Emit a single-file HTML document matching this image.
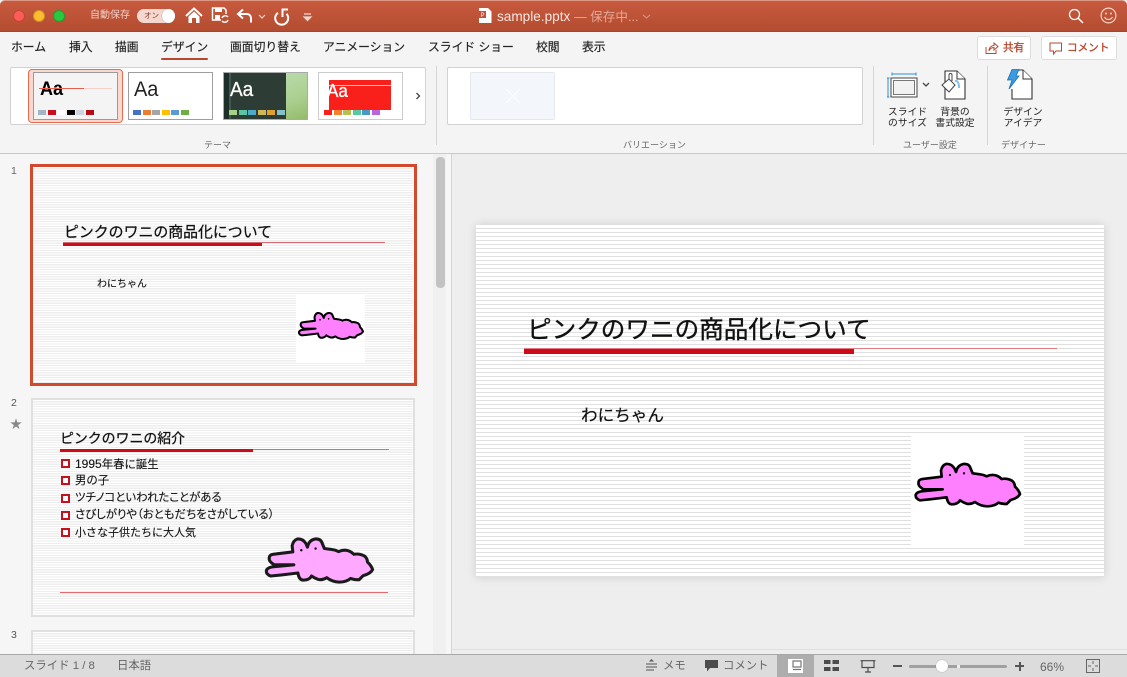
<!DOCTYPE html>
<html lang="ja"><head><meta charset="utf-8"><style>
*{box-sizing:border-box}
html,body{margin:0;padding:0;width:1127px;height:677px;overflow:hidden;background:#eee}
body{font-family:"Liberation Sans","Noto Sans CJK JP",sans-serif;position:relative;color:#222}
.a{position:absolute}
.t{position:absolute;white-space:nowrap;line-height:1}
.tab{font-size:11.8px;top:42px;color:#222;-webkit-text-stroke:.15px #222}
.g{font-size:9px;top:141px;color:#666}
.c{text-align:center;font-size:9.8px;line-height:11px;color:#222;position:absolute;white-space:nowrap}
.sw{position:absolute;height:5px;width:8px}
.lines-main{background:repeating-linear-gradient(to bottom,#fff 0,#fff 3px,#e0e0e0 3px,#e0e0e0 4px)}
.lines-th{background:repeating-linear-gradient(to bottom,#fff 0,#fff 1.2px,#eeeeee 1.2px,#eeeeee 2.4px)}
.bul{position:absolute;left:61px;width:9px;height:9px;border:2px solid #c8101c;background:#fff}
.li{position:absolute;left:75px;font-size:11.4px;line-height:1;white-space:nowrap;color:#111;-webkit-text-stroke:.12px #111}
.st{font-size:11.4px;color:#666;top:661px}
svg{position:absolute;overflow:visible}
</style></head><body>

<!-- title bar -->
<div class="a" style="left:0;top:0;width:1127px;height:32px;background:linear-gradient(#c85a3e,#b34c30);border-top:1px solid #de9684;border-bottom:1px solid #a5452c;border-radius:5px 5px 0 0"></div>
<div class="a" style="left:13px;top:10px;width:12px;height:12px;border-radius:50%;background:#fc5d57;border:1px solid #c9403a"></div>
<div class="a" style="left:33px;top:10px;width:12px;height:12px;border-radius:50%;background:#fdbc2e;border:1px solid #c99625"></div>
<div class="a" style="left:53px;top:10px;width:12px;height:12px;border-radius:50%;background:#29c83f;border:1px solid #1f9e30"></div>
<div class="t" style="left:90px;top:11px;font-size:10px;color:#f3cfc6">自動保存</div>
<div class="a" style="left:137px;top:9px;width:38px;height:14px;border-radius:7px;background:#f4d8d0"></div>
<div class="t" style="left:144px;top:12px;font-size:7.5px;color:#8a3a28">オン</div>
<div class="a" style="left:162px;top:9px;width:13px;height:14px;border-radius:50%;background:#fff;box-shadow:0 0 1px #777"></div>
<!-- home -->
<svg style="left:185px;top:7px" width="18" height="17" viewBox="0 0 18 17"><path d="M1 9 L9 1.500 L17 9" fill="none" stroke="#fff" stroke-width="2"/><path d="M3.500 9.500 L9 4.500 L14.500 9.500 V16 H11 V11 H7 V16 H3.500Z" fill="#fff"/></svg>
<!-- save -->
<svg style="left:211px;top:7px" width="18" height="18" viewBox="0 0 18 18"><path d="M10 13 H1.500 V1 H13 L15 3 V7" fill="none" stroke="#fff" stroke-width="1.500"/><path d="M4 1 H11 V5 H4Z M4 8 H9 V13 H4Z" fill="#fff"/><path d="M11 11 A3.500 3.500 0 0 1 17 10 M17 13 A3.500 3.500 0 0 1 11 14" fill="none" stroke="#fff" stroke-width="1.400"/></svg>
<!-- undo -->
<svg style="left:236px;top:8px" width="18" height="16" viewBox="0 0 18 16"><path d="M7 1.500 L2 6 L7 10.500 M2 6 H11 A4 4 0 0 1 15 10 V14.500" fill="none" stroke="#fff" stroke-width="2"/></svg>
<svg style="left:258px;top:14px" width="8" height="5" viewBox="0 0 8 5"><path d="M1 1 L4 4 L7 1" fill="none" stroke="#f5d5cc" stroke-width="1.200"/></svg>
<!-- redo -->
<svg style="left:273px;top:7px" width="17" height="18" viewBox="0 0 17 18"><path d="M5 5.800 A6.500 6.500 0 1 0 13.500 6.800" fill="none" stroke="#fff" stroke-width="2"/><path d="M9.500 10 V2.500 H15" fill="none" stroke="#fff" stroke-width="2"/></svg>
<svg style="left:303px;top:13px" width="9" height="8" viewBox="0 0 9 8"><path d="M1 1 H8 M1 4 H8 L4.500 7.500Z" stroke="#f5d5cc" stroke-width="1.200" fill="#f5d5cc"/></svg>
<!-- file -->
<svg style="left:479px;top:8px" width="13" height="15" viewBox="0 0 13 15"><path d="M0 0 H9 L12.500 3.500 V15 H0Z" fill="#fff"/><rect x="0" y="3" width="7" height="7" fill="#c44f37"/><text x="1.500" y="9" font-size="6" fill="#fff" font-family="Liberation Sans">P</text></svg>
<div class="t" style="left:497px;top:10px;font-size:13.6px;color:#f7e5e0">sample.pptx <span style="color:#e5a999;font-size:12.600px">— 保存中...</span></div>
<svg style="left:642px;top:14px" width="9" height="5" viewBox="0 0 9 5"><path d="M1 1 L4.500 4 L8 1" fill="none" stroke="#dc9a88" stroke-width="1"/></svg>
<!-- search, smile -->
<svg style="left:1068px;top:8px" width="16" height="16" viewBox="0 0 16 16"><circle cx="6.500" cy="6.500" r="5" fill="none" stroke="#fff" stroke-width="1.300"/><path d="M10 10 L15 15" stroke="#fff" stroke-width="1.500"/></svg>
<svg style="left:1100px;top:7px" width="17" height="17" viewBox="0 0 17 17"><circle cx="8.500" cy="8.500" r="7.400" fill="none" stroke="#f4d3ca" stroke-width="1.200"/><circle cx="6" cy="6.500" r="1" fill="#f4d3ca"/><circle cx="11" cy="6.500" r="1" fill="#f4d3ca"/><path d="M4.500 10 A4.500 4.500 0 0 0 12.500 10" fill="none" stroke="#f4d3ca" stroke-width="1.200"/></svg>

<!-- ribbon -->
<div class="a" style="left:0;top:32px;width:1127px;height:122px;background:#f4f4f4;border-bottom:1px solid #c9c9c9"></div>
<div class="t tab" style="left:11px">ホーム</div>
<div class="t tab" style="left:69px">挿入</div>
<div class="t tab" style="left:115px">描画</div>
<div class="t tab" style="left:161px">デザイン</div>
<div class="a" style="left:161px;top:58px;width:47px;height:2px;border-radius:1px;background:#b5492f"></div>
<div class="t tab" style="left:230px">画面切り替え</div>
<div class="t tab" style="left:323px">アニメーション</div>
<div class="t tab" style="left:428px">スライド ショー</div>
<div class="t tab" style="left:536px">校閲</div>
<div class="t tab" style="left:582px">表示</div>

<!-- share / comment -->
<div class="a" style="left:977px;top:36px;width:54px;height:24px;background:#fff;border:1px solid #dcdcdc;border-radius:3px"></div>
<svg style="left:985px;top:41px" width="14" height="14" viewBox="0 0 14 14"><path d="M1 6 V12.500 H11 V9" fill="none" stroke="#b9492f" stroke-width="1"/><path d="M4 10 C4 6 7 4.500 9 4.500 V2 L13 5.500 L9 9 V6.500 C7 6.500 5 7.500 4 10Z" fill="none" stroke="#b9492f" stroke-width="1"/></svg>
<div class="t" style="left:1003px;top:43px;font-size:10.6px;color:#b9492f;-webkit-text-stroke:.35px #b9492f">共有</div>
<div class="a" style="left:1041px;top:36px;width:76px;height:24px;background:#fff;border:1px solid #dcdcdc;border-radius:3px"></div>
<svg style="left:1049px;top:42px" width="14" height="13" viewBox="0 0 14 13"><path d="M1 1 H12.500 V9 H7 L4.500 12 V9 H1Z" fill="none" stroke="#b9492f" stroke-width="1"/></svg>
<div class="t" style="left:1067px;top:43px;font-size:10.6px;color:#b9492f;-webkit-text-stroke:.35px #b9492f">コメント</div>

<!-- theme gallery -->
<div class="a" style="left:10px;top:67px;width:416px;height:58px;background:#fff;border:1px solid #d2d2d2;border-radius:2px"></div>
<div class="a" style="left:28px;top:69px;width:95px;height:54px;background:#f9d8d0;border:1px solid #ea6a50;border-radius:4px"></div>
<div class="a" style="left:33px;top:72px;width:85px;height:48px;background:#f4f4f4;border:1px solid #9a9a9a"></div>
<div class="t" style="left:40px;top:80px;font-size:19px;color:#000;font-weight:700;transform:scaleX(.95);transform-origin:left">Aa</div>
<div class="a" style="left:39px;top:88px;width:45px;height:1px;background:#e2604c"></div>
<div class="a" style="left:84px;top:88px;width:28px;height:1px;background:#f6cfc8"></div>
<div class="sw" style="left:38px;top:110px;background:#a5b5c8"></div>
<div class="sw" style="left:48px;top:110px;background:#c8101c"></div>
<div class="sw" style="left:57px;top:110px;background:#fff"></div>
<div class="sw" style="left:67px;top:110px;background:#000"></div>
<div class="sw" style="left:76px;top:110px;background:#ccd4e0"></div>
<div class="sw" style="left:86px;top:110px;background:#b80c14"></div>

<div class="a" style="left:128px;top:72px;width:85px;height:48px;background:#fff;border:1px solid #9e9e9e"></div>
<div class="t" style="left:134px;top:79px;font-size:21px;color:#222;transform:scaleX(.95);transform-origin:left">Aa</div>
<div class="sw" style="left:133px;top:110px;background:#4472c4"></div>
<div class="sw" style="left:143px;top:110px;background:#ed7d31"></div>
<div class="sw" style="left:152px;top:110px;background:#a5a5a5"></div>
<div class="sw" style="left:162px;top:110px;background:#ffc000"></div>
<div class="sw" style="left:171px;top:110px;background:#5b9bd5"></div>
<div class="sw" style="left:181px;top:110px;background:#70ad47"></div>

<div class="a" style="left:223px;top:72px;width:85px;height:48px;background:linear-gradient(160deg,#c5e2bc,#a9cf8f 70%,#94bb6a);border:1px solid #aaa"></div>
<div class="a" style="left:224px;top:73px;width:62px;height:46px;background:#2d3c35"></div>
<div class="a" style="left:224px;top:73px;width:6px;height:46px;background:#1e2e2b"></div>
<div class="a" style="left:229px;top:73px;width:2px;height:46px;background:#405a50"></div>
<div class="t" style="left:230px;top:80px;font-size:20px;color:#fff;transform:scaleX(.95);transform-origin:left;-webkit-text-stroke:.3px #fff">Aa</div>
<div class="sw" style="left:229px;top:110px;background:#a3d288"></div>
<div class="sw" style="left:239px;top:110px;background:#5cc5a0"></div>
<div class="sw" style="left:248px;top:110px;background:#4eaac8"></div>
<div class="sw" style="left:258px;top:110px;background:#d0b858"></div>
<div class="sw" style="left:267px;top:110px;background:#e0a030"></div>
<div class="sw" style="left:277px;top:110px;background:#88c0c8"></div>

<div class="a" style="left:318px;top:72px;width:85px;height:48px;background:#fff;border:1px solid #ccc"></div>
<div class="a" style="left:329px;top:80px;width:62px;height:30px;background:#f9201c"></div>
<div class="a" style="left:329px;top:85px;width:62px;height:1px;background:#fbb"></div>
<div class="t" style="left:327px;top:82px;font-size:18px;color:#fff;transform:scaleX(.95);transform-origin:left;-webkit-text-stroke:.3px #fff">Aa</div>
<div class="sw" style="left:324px;top:110px;background:#f9201c"></div>
<div class="sw" style="left:334px;top:110px;background:#f58030"></div>
<div class="sw" style="left:343px;top:110px;background:#b8c050"></div>
<div class="sw" style="left:353px;top:110px;background:#5cc8a0"></div>
<div class="sw" style="left:362px;top:110px;background:#4898c8"></div>
<div class="sw" style="left:372px;top:110px;background:#b868d8"></div>
<svg style="left:415px;top:92px" width="6" height="8" viewBox="0 0 6 8"><path d="M1.500 1 L4.500 4 L1.500 7" fill="none" stroke="#444" stroke-width="1.300"/></svg>
<div class="t g" style="left:204px">テーマ</div>
<div class="a" style="left:436px;top:66px;width:1px;height:79px;background:#d5d5d5"></div>

<!-- variations -->
<div class="a" style="left:447px;top:67px;width:416px;height:58px;background:#fff;border:1px solid #d2d2d2;border-radius:2px"></div>
<div class="a" style="left:470px;top:72px;width:85px;height:48px;background:#f3f7fc;border:1px solid #e4e8ee;border-radius:2px"></div>
<svg style="left:505px;top:88px" width="16" height="16" viewBox="0 0 16 16"><path d="M1 1 L15 15 M15 1 L1 15" stroke="#fff" stroke-width="1"/></svg>
<div class="t g" style="left:623px">バリエーション</div>
<div class="a" style="left:873px;top:66px;width:1px;height:79px;background:#d5d5d5"></div>

<!-- slide size -->
<svg style="left:887px;top:72px" width="32" height="26" viewBox="0 0 32 26"><path d="M5 2 H29 M5 0.500 V3.500 M29 0.500 V3.500 M1 6 V25 M0 6 H2.500 M0 25 H2.500" stroke="#2d8fd8" stroke-width="1" fill="none"/><rect x="4" y="6" width="26" height="19" fill="#fff" stroke="#444"/><rect x="6.500" y="8.500" width="21" height="14" fill="#f2f2f2" stroke="#777"/></svg>
<svg style="left:922px;top:82px" width="8" height="6" viewBox="0 0 8 6"><path d="M1 1 L4 4 L7 1" fill="none" stroke="#444" stroke-width="1.300"/></svg>
<!-- bg format -->
<svg style="left:941px;top:70px" width="26" height="30" viewBox="0 0 26 30"><path d="M4 1 H16 L24 9 V29 H4Z" fill="#fff" stroke="#333" stroke-width="1.100"/><path d="M16 1 V9 H24" fill="#fff" stroke="#333" stroke-width="1"/><path d="M1 15 L8 9 L14 15 L8 22Z" fill="#fff" stroke="#444" stroke-width="1"/><path d="M8 9 V5 A1.500 1.500 0 0 1 11 5 V11" fill="none" stroke="#444"/><path d="M14 11 C17 10 18 14 18 18" fill="none" stroke="#86bfe8" stroke-width="2"/></svg>
<div class="c" style="left:880px;top:107px;width:55px">スライド<br>のサイズ</div>
<div class="c" style="left:930px;top:107px;width:50px">背景の<br>書式設定</div>
<div class="t g" style="left:903px">ユーザー設定</div>
<div class="a" style="left:987px;top:66px;width:1px;height:79px;background:#d5d5d5"></div>

<!-- designer -->
<svg style="left:1006px;top:69px" width="28" height="31" viewBox="0 0 28 31"><path d="M7 1 H17 L26 10 V30 H6 V20" fill="#fff" stroke="#333" stroke-width="1.100"/><path d="M17 1 V10 H26" fill="#fff" stroke="#333" stroke-width="1"/><path d="M6 0.500 H13 L10 7 H13 L3 20 L6 11 H1.500Z" fill="#3b9be0" stroke="#1f6fb0" stroke-width=".8"/></svg>
<div class="c" style="left:998px;top:107px;width:50px">デザイン<br>アイデア</div>
<div class="t g" style="left:1001px">デザイナー</div>

<!-- panes -->
<div class="a" style="left:0;top:154px;width:433px;height:501px;background:#f6f6f6"></div>
<div class="a" style="left:433px;top:154px;width:13px;height:501px;background:#f0f0f0"></div>
<div class="a" style="left:446px;top:154px;width:6px;height:501px;background:#f6f6f6;border-right:1px solid #d4d4d4"></div>
<div class="a" style="left:436px;top:157px;width:9px;height:131px;border-radius:4px;background:#c3c3c3"></div>
<div class="a" style="left:452px;top:154px;width:675px;height:501px;background:#eeeeee"></div>
<div class="a" style="left:452px;top:649px;width:675px;height:1px;background:#dedede"></div>

<!-- thumb 1 -->
<div class="t" style="left:11px;top:166px;font-size:10.5px;color:#666">1</div>
<div class="a lines-th" style="left:30px;top:164px;width:387px;height:222px;border:3px solid #d24a2e"></div>
<div class="t" style="left:64px;top:226px;font-size:14.900px;color:#111;-webkit-text-stroke:.25px #111">ピンクのワニの商品化について</div>
<div class="a" style="left:63px;top:242px;width:322px;height:1px;background:#d66a72"></div>
<div class="a" style="left:63px;top:243px;width:199px;height:3px;background:#cc0c18"></div>
<div class="t" style="left:97px;top:280px;font-size:10px;color:#111;-webkit-text-stroke:.12px #111">わにちゃん</div>
<div class="a" style="left:296px;top:294px;width:69px;height:69px;background:#fff"></div>
<svg style="left:277px;top:286px" width="98.400" height="86" viewBox="0 0 480 420"><path d="M122 202 Q112 194 117 182 Q120 177 135 176 L185 170 L183 152 Q186 136 198 132 Q214 130 224 146 L228 156 Q232 136 250 132 Q268 130 272 146 L278 160 L300 163 Q310 164 320 169 Q335 162 350 167 Q358 170 365 177 Q380 174 396 182 Q404 188 405 200 Q416 210 420 222 Q414 234 392 240 Q386 246 380 252 Q365 252 355 248 Q345 258 322 259 Q300 258 285 246 Q272 254 260 251 Q250 248 240 241 Q234 253 215 253 Q203 252 200 232 L150 238 L120 241 Q106 236 107 225 Q110 216 125 214 L188 208 L130 208Z" fill="#ff80ff" stroke="#000" stroke-width="10" stroke-linejoin="round"/><circle cx="210" cy="165" r="4" fill="#000"/><circle cx="252" cy="160" r="4" fill="#000"/></svg>

<!-- thumb 2 -->
<div class="t" style="left:11px;top:398px;font-size:10.5px;color:#555">2</div>
<div class="t" style="left:10px;top:418px;font-size:12px;color:#888">★</div>
<div class="a lines-th" style="left:31px;top:398px;width:384px;height:219px;border:2px solid #e0e0e0"></div>
<div class="t" style="left:60px;top:432px;font-size:13.900px;color:#111;-webkit-text-stroke:.25px #111">ピンクのワニの紹介</div>
<div class="a" style="left:60px;top:449px;width:329px;height:1px;background:#e06c70"></div>
<div class="a" style="left:60px;top:449px;width:193px;height:3px;background:#cc0c18"></div>
<div class="bul" style="top:459px"></div><div class="li" style="top:458px"><span style="font-size:12px">1995</span>年春に誕生</div>
<div class="bul" style="top:476px"></div><div class="li" style="top:476px">男の子</div>
<div class="bul" style="top:494px"></div><div class="li" style="top:493px;font-feature-settings:'palt'">ツチノコといわれたことがある</div>
<div class="bul" style="top:511px"></div><div class="li" style="top:510px;font-feature-settings:'palt'">さびしがりや（おともだちをさがしている）</div>
<div class="bul" style="top:528px"></div><div class="li" style="top:528px;font-size:11px">小さな子供たちに大人気</div>
<svg style="left:230px;top:494px" width="163" height="143" viewBox="0 0 480 420"><path d="M122 202 Q112 194 117 182 Q120 177 135 176 L185 170 L183 152 Q186 136 198 132 Q214 130 224 146 L228 156 Q232 136 250 132 Q268 130 272 146 L278 160 L300 163 Q310 164 320 169 Q335 162 350 167 Q358 170 365 177 Q380 174 396 182 Q404 188 405 200 Q416 210 420 222 Q414 234 392 240 Q386 246 380 252 Q365 252 355 248 Q345 258 322 259 Q300 258 285 246 Q272 254 260 251 Q250 248 240 241 Q234 253 215 253 Q203 252 200 232 L150 238 L120 241 Q106 236 107 225 Q110 216 125 214 L188 208 L130 208Z" fill="#ffa8ff" stroke="#1a1a1a" stroke-width="9" stroke-linejoin="round"/><circle cx="210" cy="165" r="3.500" fill="#000"/><circle cx="252" cy="160" r="3.500" fill="#000"/></svg>
<div class="a" style="left:60px;top:592px;width:328px;height:1px;background:#e06c70"></div>

<!-- thumb 3 -->
<div class="t" style="left:11px;top:630px;font-size:10.5px;color:#555">3</div>
<div class="a lines-th" style="left:31px;top:630px;width:384px;height:40px;border:2px solid #e0e0e0"></div>

<!-- main slide -->
<div class="a lines-main" style="left:476px;top:225px;width:628px;height:352px;box-shadow:0 0 9px rgba(0,0,0,.14)"></div>
<div class="t" style="left:527px;top:319px;font-size:24.600px;color:#111;-webkit-text-stroke:.35px #111">ピンクのワニの商品化について</div>
<div class="a" style="left:524px;top:348px;width:533px;height:1px;background:#e27c80"></div>
<div class="a" style="left:524px;top:349px;width:330px;height:5px;background:#cc0c18"></div>
<div class="t" style="left:581px;top:408px;font-size:16.600px;color:#111;-webkit-text-stroke:.2px #111">わにちゃん</div>
<div class="a" style="left:911px;top:433px;width:113px;height:112px;background:#fff"></div>
<svg style="left:880px;top:420px" width="160" height="140" viewBox="0 0 480 420"><path d="M122 202 Q112 194 117 182 Q120 177 135 176 L185 170 L183 152 Q186 136 198 132 Q214 130 224 146 L228 156 Q232 136 250 132 Q268 130 272 146 L278 160 L300 163 Q310 164 320 169 Q335 162 350 167 Q358 170 365 177 Q380 174 396 182 Q404 188 405 200 Q416 210 420 222 Q414 234 392 240 Q386 246 380 252 Q365 252 355 248 Q345 258 322 259 Q300 258 285 246 Q272 254 260 251 Q250 248 240 241 Q234 253 215 253 Q203 252 200 232 L150 238 L120 241 Q106 236 107 225 Q110 216 125 214 L188 208 L130 208Z" fill="#ff80ff" stroke="#000" stroke-width="8" stroke-linejoin="round"/><circle cx="210" cy="165" r="3.500" fill="#000"/><circle cx="252" cy="160" r="3.500" fill="#000"/></svg>

<!-- status bar -->
<div class="a" style="left:0;top:654px;width:1127px;height:23px;background:#dcdcdc;border-top:1px solid #a8a8a8"></div>
<div class="t st" style="left:24px">スライド 1 / 8</div>
<div class="t st" style="left:117px">日本語</div>
<svg style="left:645px;top:659px" width="13" height="13" viewBox="0 0 13 13"><path d="M6.500 0 L9 2.500 H4Z" fill="#555"/><path d="M1 5 H12 M1 8 H12 M1 11 H9" stroke="#555" stroke-width="1"/></svg>
<div class="t st" style="left:663px">メモ</div>
<svg style="left:704px;top:659px" width="15" height="14" viewBox="0 0 15 14"><path d="M1 1 H14 V9 H6 L3 12.500 V9 H1Z" fill="#4c4c4c"/></svg>
<div class="t st" style="left:723px">コメント</div>
<div class="a" style="left:777px;top:655px;width:37px;height:22px;background:#adadad"></div>
<svg style="left:788px;top:659px" width="15" height="14" viewBox="0 0 15 14"><path d="M0 0 H15 V14 H0Z" fill="#fff"/><path d="M5 2 H13 V8 H5Z M5 10.500 H13" fill="none" stroke="#777" stroke-width="1.200"/></svg>
<svg style="left:824px;top:660px" width="15" height="12" viewBox="0 0 15 12"><path d="M0 0 H6.500 V4 H0Z M8.500 0 H15 V4 H8.500Z M0 7 H6.500 V11 H0Z M8.500 7 H15 V11 H8.500Z" fill="#4c4c4c"/></svg>
<svg style="left:860px;top:660px" width="16" height="13" viewBox="0 0 16 13"><path d="M0.500 .700 H15.500 M2 .700 V7.500 H14 V.700 M8 7.500 V11.500 M5 12 H11" stroke="#4c4c4c" stroke-width="1.200" fill="none"/></svg>
<div class="a" style="left:893px;top:665px;width:9px;height:2px;background:#555"></div>
<div class="a" style="left:909px;top:665px;width:98px;height:3px;border-radius:2px;background:#a0a0a0"></div>
<div class="a" style="left:957px;top:665px;width:3px;height:3px;background:#eee"></div>
<div class="a" style="left:936px;top:660px;width:12px;height:12px;border-radius:50%;background:#fff;box-shadow:0 0 1px #777"></div>
<div class="a" style="left:1015px;top:665px;width:9px;height:2px;background:#555"></div>
<div class="a" style="left:1018.500px;top:662px;width:2px;height:9px;background:#555"></div>
<div class="t st" style="left:1040px;font-size:12px">66%</div>
<svg style="left:1086px;top:659px" width="14" height="14" viewBox="0 0 14 14"><rect x=".5" y=".5" width="13" height="13" fill="none" stroke="#666"/><path d="M7 2 V5 M7 9 V12 M2 7 H5 M9 7 H12" stroke="#666" stroke-width="1"/></svg>
</body></html>
